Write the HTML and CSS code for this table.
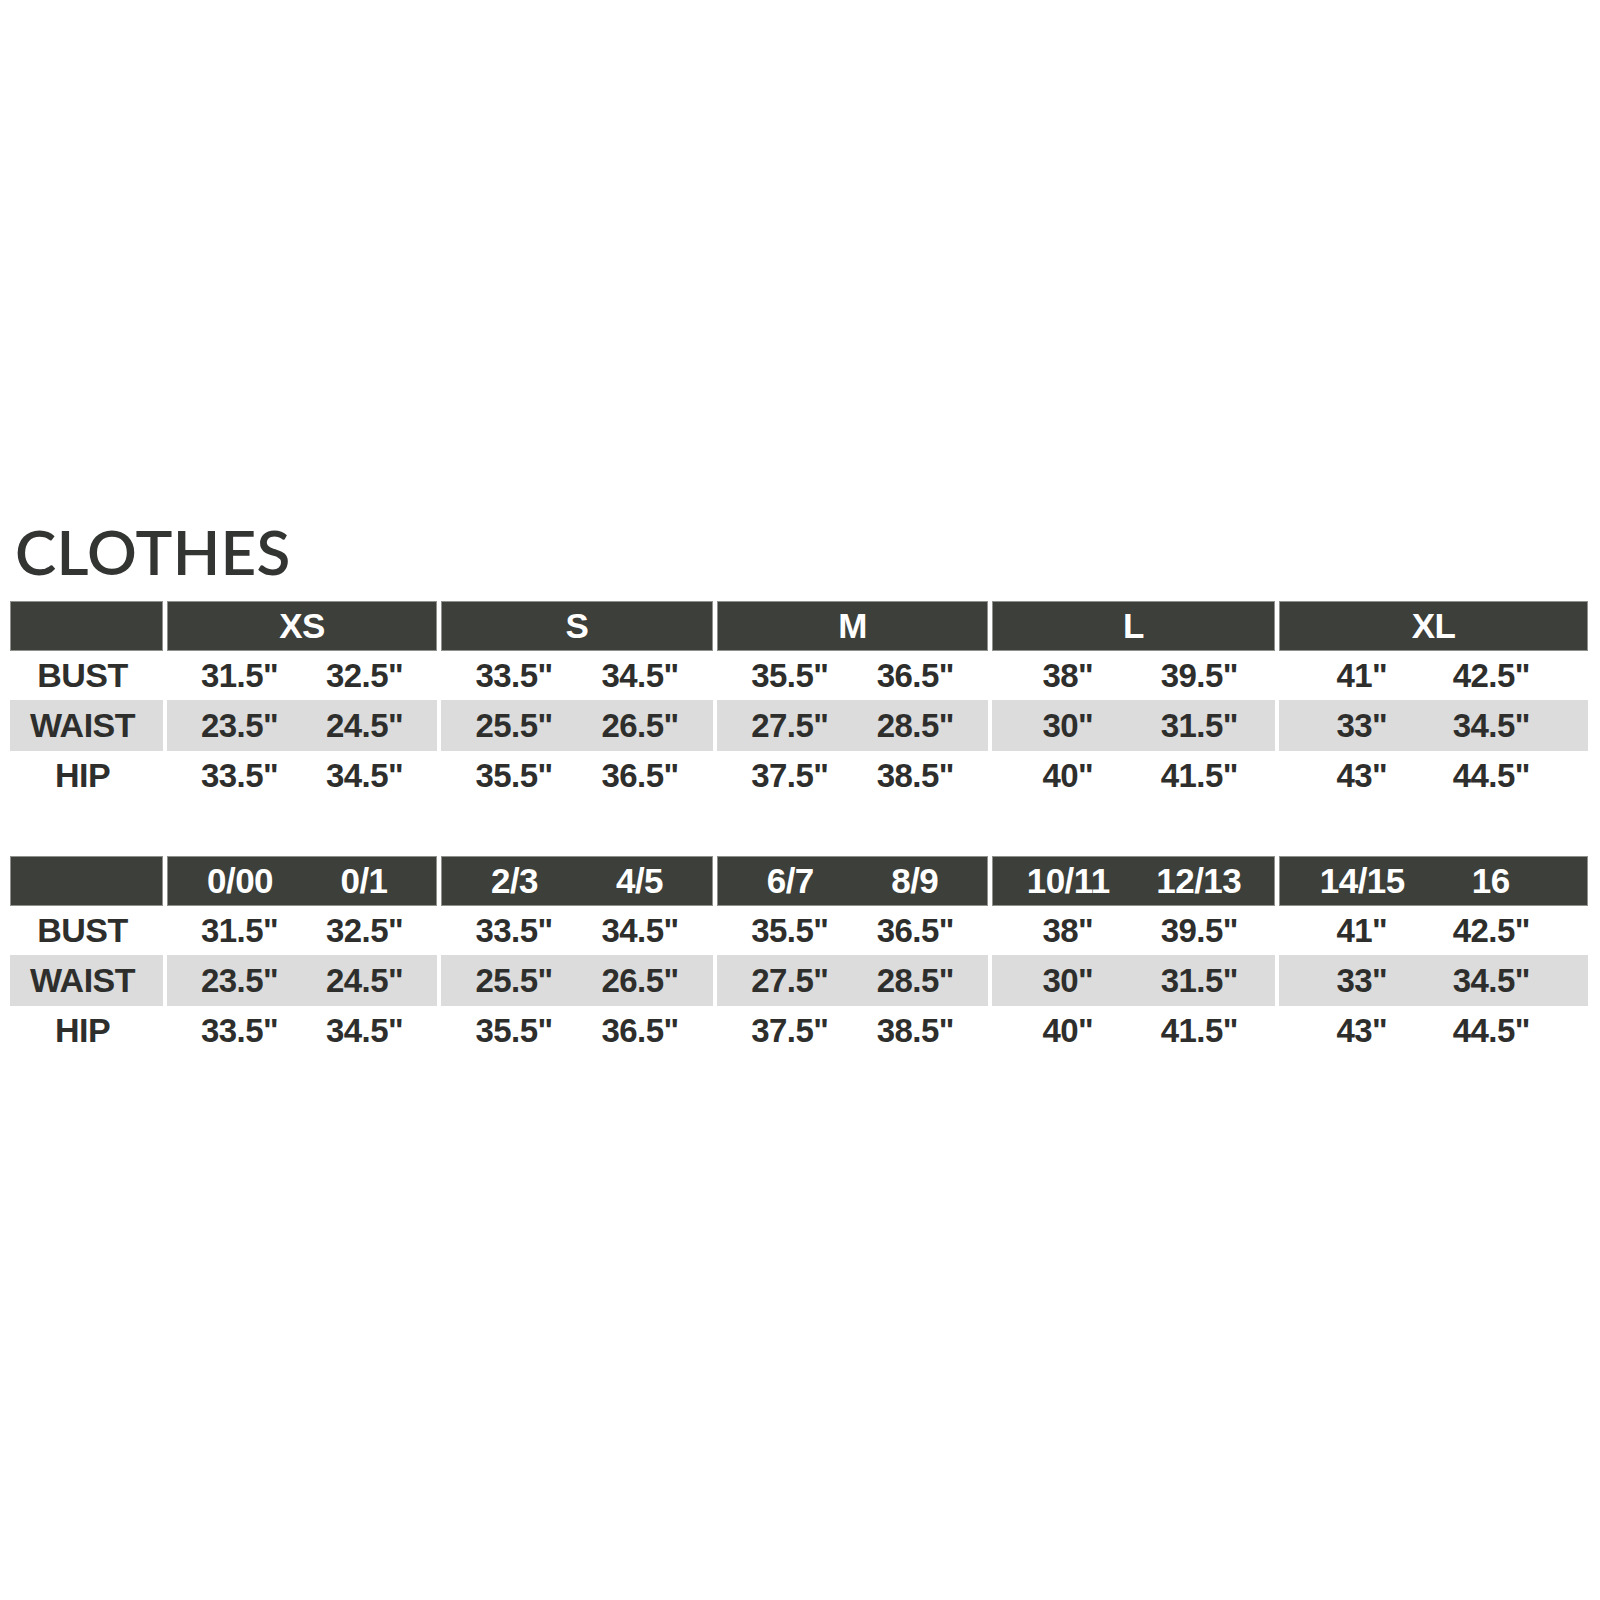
FILE: index.html
```html
<!DOCTYPE html>
<html lang="en">
<head>
<meta charset="utf-8">
<title>Clothes size chart</title>
<link rel="stylesheet" href="styles.css">
</head>
<body>
<main class="page">
  <h1 class="title">CLOTHES</h1>

  <section class="chart">
    <div class="hd label"></div>
    <div class="hd group"><span class="one">XS</span></div>
    <div class="hd group"><span class="one">S</span></div>
    <div class="hd group"><span class="one">M</span></div>
    <div class="hd group"><span class="one">L</span></div>
    <div class="hd group"><span class="one">XL</span></div>

    <div class="cell label">BUST</div>
    <div class="cell group"><span>31.5"</span><span>32.5"</span></div>
    <div class="cell group"><span>33.5"</span><span>34.5"</span></div>
    <div class="cell group"><span>35.5"</span><span>36.5"</span></div>
    <div class="cell group"><span>38"</span><span>39.5"</span></div>
    <div class="cell group last"><span>41"</span><span>42.5"</span></div>

    <div class="cell label shade">WAIST</div>
    <div class="cell group shade"><span>23.5"</span><span>24.5"</span></div>
    <div class="cell group shade"><span>25.5"</span><span>26.5"</span></div>
    <div class="cell group shade"><span>27.5"</span><span>28.5"</span></div>
    <div class="cell group shade"><span>30"</span><span>31.5"</span></div>
    <div class="cell group shade last"><span>33"</span><span>34.5"</span></div>

    <div class="cell label">HIP</div>
    <div class="cell group"><span>33.5"</span><span>34.5"</span></div>
    <div class="cell group"><span>35.5"</span><span>36.5"</span></div>
    <div class="cell group"><span>37.5"</span><span>38.5"</span></div>
    <div class="cell group"><span>40"</span><span>41.5"</span></div>
    <div class="cell group last"><span>43"</span><span>44.5"</span></div>
  </section>

  <section class="chart chart-second">
    <div class="hd label"></div>
    <div class="hd group"><span>0/00</span><span>0/1</span></div>
    <div class="hd group"><span>2/3</span><span>4/5</span></div>
    <div class="hd group"><span>6/7</span><span>8/9</span></div>
    <div class="hd group"><span>10/11</span><span>12/13</span></div>
    <div class="hd group last"><span>14/15</span><span>16</span></div>

    <div class="cell label">BUST</div>
    <div class="cell group"><span>31.5"</span><span>32.5"</span></div>
    <div class="cell group"><span>33.5"</span><span>34.5"</span></div>
    <div class="cell group"><span>35.5"</span><span>36.5"</span></div>
    <div class="cell group"><span>38"</span><span>39.5"</span></div>
    <div class="cell group last"><span>41"</span><span>42.5"</span></div>

    <div class="cell label shade">WAIST</div>
    <div class="cell group shade"><span>23.5"</span><span>24.5"</span></div>
    <div class="cell group shade"><span>25.5"</span><span>26.5"</span></div>
    <div class="cell group shade"><span>27.5"</span><span>28.5"</span></div>
    <div class="cell group shade"><span>30"</span><span>31.5"</span></div>
    <div class="cell group shade last"><span>33"</span><span>34.5"</span></div>

    <div class="cell label">HIP</div>
    <div class="cell group"><span>33.5"</span><span>34.5"</span></div>
    <div class="cell group"><span>35.5"</span><span>36.5"</span></div>
    <div class="cell group"><span>37.5"</span><span>38.5"</span></div>
    <div class="cell group"><span>40"</span><span>41.5"</span></div>
    <div class="cell group last"><span>43"</span><span>44.5"</span></div>
  </section>
</main>
</body>
</html>
```

FILE: styles.css
```css
html, body {
  margin: 0;
  padding: 0;
  background: #ffffff;
}

.page {
  width: 1600px;
  height: 1600px;
  box-sizing: border-box;
  padding: 520px 12px 0 10px;
  font-family: "Liberation Sans", Arial, sans-serif;
}

.title {
  margin: 0 0 18px 5px;
  font-family: Lato, "Open Sans", sans-serif;
  font-weight: 600;
  font-size: 62px;
  line-height: 63px;
  color: #333532;
  letter-spacing: 0.3px;
}

.chart {
  display: grid;
  grid-template-columns: 153px 270px 272px 271px 283px 309px;
  grid-template-rows: 50px 49px 51px 49px;
  column-gap: 4px;
}

.chart-second {
  margin-top: 56px;
}

.hd {
  background: #3c3f3a;
  border: 1px solid #8e918c;
  box-sizing: border-box;
  color: #ffffff;
  font-weight: 700;
  font-size: 35px;
  letter-spacing: -0.5px;
}

.cell {
  color: #2e2f2d;
  font-weight: 700;
  font-size: 33px;
  letter-spacing: -0.6px;
}

.shade {
  background: #dcdcdc;
}

.label {
  display: flex;
  align-items: center;
  justify-content: center;
  padding-right: 8px;
  font-size: 34px;
  letter-spacing: -0.5px;
}

.group {
  display: grid;
  grid-template-columns: 1fr 1fr;
  align-items: center;
  justify-items: center;
  padding: 0 10px;
}

.group.last {
  padding: 0 32px 0 18px;
}

.group .one {
  grid-column: 1 / 3;
}
```
